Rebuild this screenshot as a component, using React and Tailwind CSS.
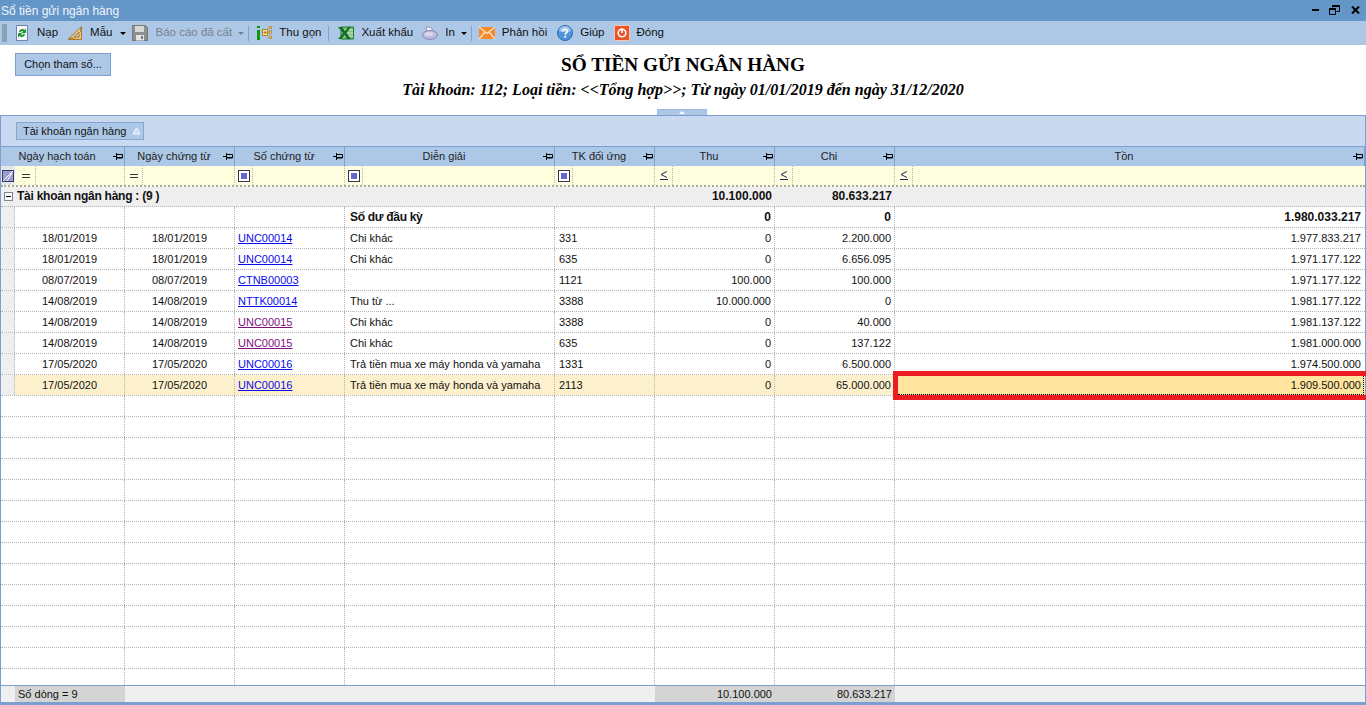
import React from 'react';

const GRID = 'grid grid-cols-[14px_110px_110px_110px_210px_100px_120px_120px_1fr]';

const HEADERS = ['Ngày hạch toán', 'Ngày chứng từ', 'Số chứng từ', 'Diễn giải', 'TK đối ứng', 'Thu', 'Chi', 'Tồn'];
const FILTERS = ['eq', 'eq', 'box', 'box', 'box', 'le', 'le', 'le'];

const BLUE = 'text-[#0a0aee]';
const PURPLE = 'text-[#80107f]';

const ROWS = [
  ['18/01/2019', '18/01/2019', 'UNC00014', BLUE, 'Chi khác', '331', '0', '2.200.000', '1.977.833.217'],
  ['18/01/2019', '18/01/2019', 'UNC00014', BLUE, 'Chi khác', '635', '0', '6.656.095', '1.971.177.122'],
  ['08/07/2019', '08/07/2019', 'CTNB00003', BLUE, '', '1121', '100.000', '100.000', '1.971.177.122'],
  ['14/08/2019', '14/08/2019', 'NTTK00014', BLUE, 'Thu từ ...', '3388', '10.000.000', '0', '1.981.177.122'],
  ['14/08/2019', '14/08/2019', 'UNC00015', PURPLE, 'Chi khác', '3388', '0', '40.000', '1.981.137.122'],
  ['14/08/2019', '14/08/2019', 'UNC00015', PURPLE, 'Chi khác', '635', '0', '137.122', '1.981.000.000'],
  ['17/05/2020', '17/05/2020', 'UNC00016', BLUE, 'Trả tiền mua xe máy honda và yamaha', '1331', '0', '6.500.000', '1.974.500.000'],
  ['17/05/2020', '17/05/2020', 'UNC00016', BLUE, 'Trả tiền mua xe máy honda và yamaha', '2113', '0', '65.000.000', '1.909.500.000'],
];

const EMPTY_ROWS = Array.from({ length: 14 }, (_, i) => i);

const RefreshIcon = () => (
  <svg width="16" height="16" viewBox="0 0 16 16">
    <path d="M2.500 .5h11v15h-11z" fill="#f4f6fb" stroke="#6f7fb0" />
    <path d="M5 7a3.200 3.200 0 0 1 5.500-2L12 3.500V8H7.500l1.500-1.500A1.500 1.500 0 0 0 6.500 7.500z" fill="#1c9c2c" />
    <path d="M11 9a3.200 3.200 0 0 1-5.500 2L4 12.500V8h4.500L7 9.500a1.500 1.500 0 0 0 2.500-1z" fill="#1c9c2c" />
  </svg>
);

const RulerIcon = () => (
  <svg width="16" height="16" viewBox="0 0 16 16">
    <path d="M14.500 1.500v13H1z" fill="#eec77a" stroke="#a77a30" />
    <path d="M12 7v5H7z" fill="#adc8e6" stroke="#a77a30" />
    <path d="M3 14v-1.500M5 14v-1.500M7 14v-1M14 4h-1M14 6h-1" stroke="#7a5a20" />
  </svg>
);

const SaveIcon = () => (
  <svg width="16" height="16" viewBox="0 0 16 16">
    <path d="M.5 .5h13l2 2v13H.5z" fill="#8f8f8f" stroke="#777" />
    <path d="M3 1h9v6H3z" fill="#d8d8d8" />
    <path d="M4 10h8v5.500H4z" fill="#e6e6e6" />
    <path d="M9 11h2v3H9z" fill="#777" />
  </svg>
);

const CollapseIcon = () => (
  <svg width="16" height="16" viewBox="0 0 16 16">
    <path d="M1 1h3v2H1zM1 5h3v10H1z" fill="#0a9a0a" />
    <path d="M6.500 4.500h5v6h-5z" fill="#f7e7a6" stroke="#b07a20" />
    <path d="M7.500 7.500h3M9 6v3" stroke="#b07a20" />
    <path d="M13 1.500h2.500v2.500H13zM13 6h2.500v2.500H13zM13 11h2.500v2.500H13z" fill="#f2c36b" stroke="#b07a20" strokeWidth=".7" />
  </svg>
);

const ExcelIcon = () => (
  <svg width="16" height="16" viewBox="0 0 16 16">
    <path d="M3 2h12.500v12H3z" fill="#7fc07f" stroke="#1f7a2f" />
    <path d="M6 5h9M6 8h9M6 11h9" stroke="#d6efd6" />
    <path d="M0 2h4l3 4 3-4h3L8.500 8l4.500 6H9L6.500 10 3.500 14H0l5-6z" fill="#176f27" />
  </svg>
);

const PrinterIcon = () => (
  <svg width="16" height="16" viewBox="0 0 16 16">
    <path d="M4.500 1.500 10 3v4H4.500z" fill="#f0eff8" stroke="#9c97c4" />
    <ellipse cx="8" cy="10" rx="7.500" ry="4.500" fill="#bdb8dc" stroke="#8f8ab8" />
    <ellipse cx="7" cy="9" rx="4.500" ry="2" fill="#d9d6ee" />
  </svg>
);

const MailIcon = () => (
  <svg width="16" height="16" viewBox="0 0 16 16">
    <path d="M0 2h16v12H0z" fill="#f58a2a" />
    <path d="M0 2l8 6.500L16 2M0 14l6-7M16 14l-6-7" stroke="#fde6c8" strokeWidth="1.200" fill="none" />
  </svg>
);

const HelpIcon = () => (
  <svg width="16" height="16" viewBox="0 0 16 16">
    <circle cx="8" cy="8" r="7.500" fill="#4f94dc" stroke="#2a68ac" />
    <path d="M2 6a6 5 0 0 1 12 0 8 4 0 0 1-12 0z" fill="#9cc6f0" />
    <path d="M5.800 6.200C5.800 3.600 10.400 3.700 10.400 6.200 10.400 7.800 8.200 7.800 8.200 9.700" fill="none" stroke="#fff" strokeWidth="1.600" />
    <path d="M7.300 10.800h1.800v1.800H7.300z" fill="#fff" />
  </svg>
);

const CloseIcon = () => (
  <svg width="16" height="16" viewBox="0 0 16 16">
    <path d="M.5 .5h15v15H.5z" fill="#e8542c" stroke="#f6c4b0" />
    <circle cx="8" cy="8" r="3.800" fill="none" stroke="#fff" strokeWidth="1.600" />
    <path d="M8 3.500v4.500" stroke="#fff" strokeWidth="1.600" />
  </svg>
);

const PinIcon = () => (
  <svg width="10" height="7" viewBox="0 0 10 7" className="block">
    <path d="M0 3.500h3M3.500 0v7M3.500 1.500h6v3.500h-6" fill="none" stroke="#000" />
    <path d="M4 4.500h5" stroke="#000" />
  </svg>
);

const FilterMark = ({ type }) => {
  if (type === 'eq') {
    return (
      <div className="w-[8px] flex flex-col gap-[2px]">
        <div className="h-px bg-[#333]" />
        <div className="h-px bg-[#333]" />
      </div>
    );
  }
  if (type === 'le') {
    return (
      <svg width="8" height="9" viewBox="0 0 8 9">
        <path d="M7 .5L1 3.500l6 3" fill="none" stroke="#22225a" />
        <path d="M0 8.500h8" stroke="#22225a" />
      </svg>
    );
  }
  return (
    <div className="w-[12px] h-[12px] border border-[#333355] bg-white flex items-center justify-center">
      <div className="w-[6px] h-[6px] bg-[#6666cc]" />
    </div>
  );
};

const Sep = ({ className = '-mx-[2px]' }) => <div className={`w-px h-[15px] bg-[#7fa3cf] ${className}`} />;

const ToolItem = ({ icon, label, caret, disabled, className = '', caretClass = 'ml-[-1px]' }) => (
  <div className={`flex items-center gap-[7px] ${caret ? '-mr-[3px]' : ''} ${disabled ? 'text-[#77818e]' : 'text-[#111]'} ${className}`}>
    {icon}
    <span className="text-[11.5px]">{label}</span>
    {caret && <div className={`w-0 h-0 ${caretClass} border-x-[3px] border-x-transparent border-t-[3px] ${disabled ? 'border-t-[#77818e]' : 'border-t-black'}`} />}
  </div>
);

const cellLine = 'border-r border-dotted border-r-[#b4b4b4]';

const DataRow = ({ r, selected }) => {
  const bg = selected ? 'bg-[#fdf1cd]' : 'bg-white';
  const cell = `${cellLine} ${bg} px-[3px] truncate leading-[20px]`;
  return (
    <div className={`${GRID} h-[21px] border-b border-dotted border-b-[#b4b4b4]`}>
      <div className={`bg-[#efefef] ${cellLine}`} />
      <div className={`${cell} text-center`}>{r[0]}</div>
      <div className={`${cell} text-center`}>{r[1]}</div>
      <div className={cell}><span className={`underline ${r[3]}`}>{r[2]}</span></div>
      <div className={`${cell} pl-[5px]`}>{r[4]}</div>
      <div className={`${cell} pl-[4px]`}>{r[5]}</div>
      <div className={`${cell} text-right`}>{r[6]}</div>
      <div className={`${cell} text-right`}>{r[7]}</div>
      <div className={`${selected ? 'bg-[#ffe59e]' : 'bg-white'} text-right pr-[4px] leading-[20px]`}>{r[8]}</div>
    </div>
  );
};

const EmptyRow = () => (
  <div className={`${GRID} h-[21px] border-b border-dotted border-b-[#b4b4b4]`}>
    <div className="bg-white" />
    {HEADERS.map((h, i) => (
      <div key={h} className={i < 7 ? cellLine : ''} />
    ))}
  </div>
);

export default function App() {
  return (
    <div className="h-[705px] w-[1366px] overflow-hidden bg-white flex flex-col text-[11px] font-['Liberation_Sans',Arial,sans-serif] text-[#111]">
      {/* title bar */}
      <div className="h-[21px] shrink-0 bg-[#6496c8] flex items-center justify-between pl-[1px] pr-[6px]">
        <span className="text-white/90 text-[12px]">Sổ tiền gửi ngân hàng</span>
        <div className="flex items-center gap-[10px] pb-[2px]">
          <div className="w-[7px] h-[2px] bg-black" />
          <svg width="11" height="10" viewBox="0 0 11 10">
            <path d="M3.500 2.500V.5h7v6H7.500" fill="none" stroke="#000" />
            <path d="M.5 3.500h6v6h-6z" fill="none" stroke="#000" />
            <path d="M.5 4h6" stroke="#000" strokeWidth="2" />
            <path d="M3.500 1h7" stroke="#000" strokeWidth="2" />
          </svg>
          <svg width="9" height="8" viewBox="0 0 9 8" className="ml-[1px]">
            <path d="M1 .5l7 7M8 .5l-7 7" stroke="#000" strokeWidth="2" />
          </svg>
        </div>
      </div>

      {/* toolbar */}
      <div className="h-[24px] shrink-0 bg-[#adc8e6] flex items-center pl-[2px] gap-[9px]">
        <div className="w-[5px] h-[18px] -mr-[2px] bg-[radial-gradient(#8aa0b8_1px,transparent_1px)] bg-[length:2px_2px]" />
        <ToolItem icon={<RefreshIcon />} label="Nạp" />
        <ToolItem icon={<RulerIcon />} label="Mẫu" caret caretClass="ml-[1px]" />
        <ToolItem icon={<SaveIcon />} label="Báo cáo đã cất" caret disabled />
        <Sep />
        <ToolItem icon={<CollapseIcon />} label="Thu gọn" />
        <Sep className="-ml-[2px] mr-0" />
        <ToolItem icon={<ExcelIcon />} label="Xuất khẩu" />
        <ToolItem icon={<PrinterIcon />} label="In" caret />
        <Sep />
        <ToolItem icon={<MailIcon />} label="Phản hồi" className="mr-[1px]" />
        <ToolItem icon={<HelpIcon />} label="Giúp" />
        <ToolItem icon={<CloseIcon />} label="Đóng" />
      </div>

      {/* report heading */}
      <div className="h-[70px] shrink-0 relative grid grid-cols-[1fr_auto_1fr]">
        <div className="pl-[15px] pt-[8px]">
          <div className="w-[96px] h-[23px] bg-[#adc8e6] border border-[#7b9fd0] flex items-center justify-center">Chọn tham số...</div>
        </div>
        <div className="text-center font-['Liberation_Serif',serif] font-bold text-black">
          <div className="text-[19.25px] leading-[22px] mt-[9px]">SỔ TIỀN GỬI NGÂN HÀNG</div>
          <div className="text-[16px] leading-[20px] mt-[4px] italic">Tài khoản: 112; Loại tiền: &lt;&lt;Tổng hợp&gt;&gt;; Từ ngày 01/01/2019 đến ngày 31/12/2020</div>
        </div>
        <div />
        <div className="absolute left-[657px] bottom-0 w-[50px] h-[6px] bg-[#adc8e6] border-x border-t border-[#9db9dc] flex justify-center">
          <div className="w-0 h-0 mt-[1px] border-x-[3px] border-x-transparent border-b-[3px] border-b-white" />
        </div>
      </div>

      {/* grid */}
      <div className="relative flex-1 min-h-0 flex flex-col border-x border-x-[#7b9fd0] border-t border-t-[#7b9fd0] border-b-[3px] border-b-[#7b9fd0]">
        <div className="h-[30px] shrink-0 bg-[#c9daf0] pl-[15px] pt-[6px]">
          <div className="w-[128px] h-[18px] bg-[#adc8e6] border border-[#86a6d2] flex items-center justify-between pl-[6px] pr-[2px]">
            <span className="whitespace-nowrap">Tài khoản ngân hàng</span>
            <svg width="9" height="8" viewBox="0 0 9 8">
              <path d="M4.500 1L8 7H1z" fill="#c9daf0" stroke="#fbfdff" />
            </svg>
          </div>
        </div>

        <div className={`${GRID} h-[20px] shrink-0 bg-[#adc8e6] border-t border-t-[#7b9fd0]`}>
          {HEADERS.map((h, i) => (
            <div key={h} className={`relative border-r border-r-[#7b9fd0] flex items-center justify-center pr-[11px] text-[#222] ${i === 0 ? 'col-span-2' : ''}`}>
              <span>{h}</span>
              <div className="absolute right-[1px] top-[6px]"><PinIcon /></div>
            </div>
          ))}
        </div>

        <div className={`${GRID} h-[21px] shrink-0 bg-[#ffffdf] border-b-[2px] border-dotted border-b-[#a8a8a8]`}>
          <div className="bg-[#e6e6e6] flex items-center justify-center">
            <svg width="12" height="12" viewBox="0 0 12 12">
              <path d="M0 0h12v12H0z" fill="#3a3a6a" />
              <path d="M1 1h10v10H1z" fill="#9c9cd0" />
              <path d="M1 11L11 1M5 11l5-8" stroke="#fff" />
            </svg>
          </div>
          {FILTERS.map((f, i) => (
            <div key={i} className={`${i < 7 ? cellLine : ''} flex items-center`}>
              <div className={`h-full border-r border-dotted border-r-[#b4b4b4] flex items-center ${i === 0 ? 'w-[21px] pl-[7px]' : 'w-[18px]'} ${i > 0 && f === 'box' ? 'pl-[3px]' : ''} ${i > 0 && f !== 'box' ? 'pl-[5px]' : ''}`}>
                <FilterMark type={f} />
              </div>
            </div>
          ))}
        </div>

        <div className={`${GRID} h-[20px] shrink-0 bg-[#efefef] border-b border-dotted border-b-[#b4b4b4] font-bold text-[12px] leading-[19px]`}>
          <div className="relative flex items-center justify-center">
            <div className="w-[9px] h-[9px] border border-[#7b8796] bg-white flex items-center justify-center">
              <div className="w-[5px] h-px bg-black" />
            </div>
          </div>
          <div className="col-span-5 pl-[2px] tracking-[-0.25px]">Tài khoản ngân hàng : (9 )</div>
          <div className="text-right pr-[3px]">10.100.000</div>
          <div className="text-right pr-[3px]">80.633.217</div>
          <div />
        </div>

        <div className={`${GRID} h-[21px] shrink-0 border-b border-dotted border-b-[#b4b4b4] font-bold text-[12px] leading-[20px]`}>
          <div className={`bg-[#efefef] ${cellLine}`} />
          <div className={cellLine} />
          <div className={cellLine} />
          <div className={cellLine} />
          <div className={`${cellLine} pl-[5px] tracking-[-0.3px]`}>Số dư đầu kỳ</div>
          <div className={cellLine} />
          <div className={`${cellLine} text-right pr-[3px]`}>0</div>
          <div className={`${cellLine} text-right pr-[3px]`}>0</div>
          <div className="text-right pr-[4px]">1.980.033.217</div>
        </div>

        {ROWS.map((r, i) => (
          <DataRow key={i} r={r} selected={i === ROWS.length - 1} />
        ))}

        <div className="flex-1 min-h-0 overflow-hidden">
          {EMPTY_ROWS.map((i) => (
            <EmptyRow key={i} />
          ))}
        </div>

        <div className={`${GRID} h-[17px] shrink-0 bg-[#efefef] border-t border-t-[#7b9fd0] leading-[16px]`}>
          <div />
          <div className="bg-[#d4d4d4] pl-[3px]">Số dòng = 9</div>
          <div className="col-span-4" />
          <div className="bg-[#d4d4d4] text-right pr-[3px]">10.100.000</div>
          <div className="bg-[#d4d4d4] text-right pr-[3px]">80.633.217</div>
          <div />
        </div>

        {/* red highlight over the selected balance cell */}
        <div className="absolute left-[892px] top-[255px] -right-px h-[29px] border-[5px] border-r-0 border-[#ed1c24]">
          <div className="h-full border-b border-r border-dotted border-black mr-[2px]" />
        </div>
      </div>
    </div>
  );
}
